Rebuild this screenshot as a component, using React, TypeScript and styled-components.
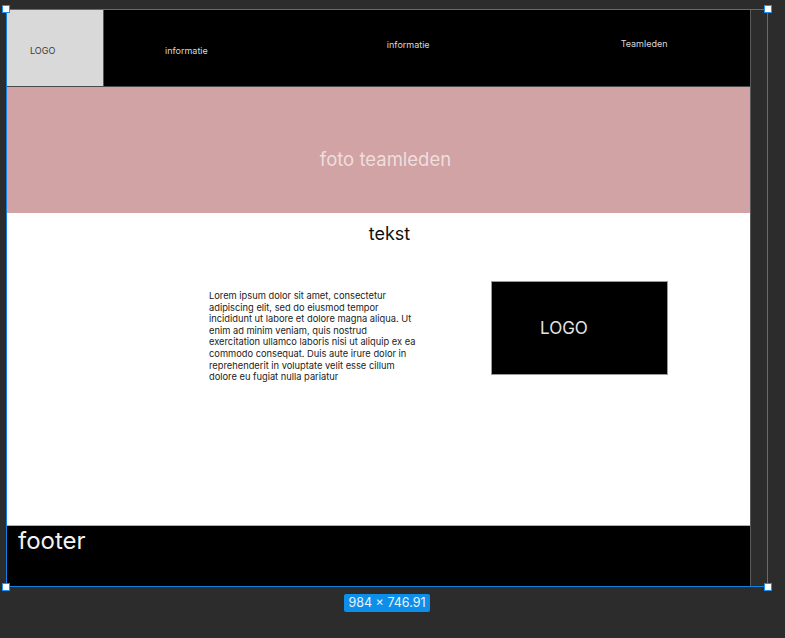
import styled, { createGlobalStyle } from 'styled-components'

const GlobalStyle = createGlobalStyle`
  html, body {
    margin: 0;
    padding: 0;
    background: #2c2c2c;
  }
  body {
    font-family: Inter, "Noto Sans", sans-serif;
    overflow: hidden;
  }
`

const loremLines = [
  'Lorem ipsum dolor sit amet, consectetur',
  'adipiscing elit, sed do eiusmod tempor',
  'incididunt ut labore et dolore magna aliqua. Ut',
  'enim ad minim veniam, quis nostrud',
  'exercitation ullamco laboris nisi ut aliquip ex ea',
  'commodo consequat. Duis aute irure dolor in',
  'reprehenderit in voluptate velit esse cillum',
  'dolore eu fugiat nulla pariatur',
]

//styled-components
const Canvas = styled.div`
  width: 785px;
  height: 638px;
  background: #2c2c2c;
  padding: 10px 0 0 7px;
  box-sizing: border-box;
  display: flex;
  flex-flow: column;
`

const Selection = styled.div`
  position: relative;
  width: 760px;
`

const Frame = styled.div`
  width: 743px;
  border-right: 1px solid #5a5a5a;
  display: flex;
  flex-flow: column;
  background: #ffffff;
`

const Outline = styled.div`
  position: absolute;
  left: -1px;
  top: -1px;
  width: 762px;
  height: 578px;
  border: 1px solid #1180e0;
  box-sizing: border-box;
  pointer-events: none;
`

const Handle = styled.div<{ $x: string; $y: string }>`
  position: absolute;
  width: 8px;
  height: 8px;
  background: #ffffff;
  border: 1.5px solid #1f8ff0;
  box-sizing: border-box;
  ${(p) => p.$x}: -5px;
  ${(p) => p.$y}: -5px;
`

const Header = styled.header`
  height: 77px;
  display: flex;
  flex-flow: row;
  align-items: flex-start;
  background: #000000;
  border-bottom: 1px solid #4a4a4a;
  box-sizing: border-box;
`

const LogoBox = styled.div`
  width: 97px;
  height: 76px;
  background: #d9d9d9;
  border-right: 1px solid #555;
  box-sizing: border-box;
  padding: 35px 0 0 23px;
  font-size: 9px;
  line-height: 11px;
  color: #3a3a3a;
`

const NavItem = styled.div<{ $left: number; $top: number }>`
  margin-left: ${(p) => p.$left}px;
  padding-top: ${(p) => p.$top}px;
  font-size: 9px;
  line-height: 11px;
  color: #d8d8d8;
`

const Hero = styled.section`
  height: 126px;
  background: #d1a3a4;
  display: flex;
  align-items: center;
  justify-content: center;
  padding-left: 14px;
  padding-top: 18px;
  box-sizing: border-box;
  font-size: 18.5px;
  color: #efdede;
`

const Content = styled.section`
  height: 313px;
  display: flex;
  flex-flow: column;
  align-items: center;
  border-bottom: 1px solid #b0b0b0;
  box-sizing: border-box;
`

const Title = styled.h2`
  margin: 10px 0 0 22px;
  font-size: 18px;
  line-height: 22px;
  font-weight: 400;
  color: #111;
`

const Row = styled.div`
  align-self: stretch;
  display: flex;
  flex-flow: row;
  align-items: flex-start;
  padding-left: 202px;
  margin-top: 36px;
`

const Paragraph = styled.p`
  width: 212px;
  margin: 9px 0 0 0;
  font-size: 9.3px;
  line-height: 11.6px;
  white-space: nowrap;
  color: #222;
`

const LogoPanel = styled.div`
  width: 177px;
  height: 94px;
  margin-left: 70px;
  background: #000;
  border: 1px solid #9a9a9a;
  box-sizing: border-box;
  display: flex;
  align-items: center;
  padding-left: 48px;
  font-size: 17px;
  color: #e4e4e4;
`

const Footer = styled.footer`
  height: 60px;
  background: #000;
  padding: 1px 0 0 11px;
  box-sizing: border-box;
  font-size: 24px;
  line-height: 28px;
  color: #f2f2f2;
`

const BadgeRow = styled.div`
  width: 760px;
  display: flex;
  justify-content: center;
  margin-top: 8px;
`

const Badge = styled.div`
  background: #0d8ee9;
  color: #e8f4ff;
  border-radius: 2px;
  padding: 2px 5px;
  font-size: 12.5px;
  line-height: 14px;
`

const App = () => {
  return (
    <>
      <GlobalStyle />
      <Canvas>
        <Selection>
          <Frame>
            <Header>
              <LogoBox>LOGO</LogoBox>
              <NavItem $left={61} $top={35}>informatie</NavItem>
              <NavItem $left={179} $top={29}>informatie</NavItem>
              <NavItem $left={191} $top={28}>Teamleden</NavItem>
            </Header>
            <Hero>foto teamleden</Hero>
            <Content>
              <Title>tekst</Title>
              <Row>
                <Paragraph>
                  {loremLines.map((line, i) => (
                    <span key={i}>
                      {line}
                      {i < loremLines.length - 1 && <br />}
                    </span>
                  ))}
                </Paragraph>
                <LogoPanel>LOGO</LogoPanel>
              </Row>
            </Content>
            <Footer>footer</Footer>
          </Frame>
          <Outline>
            <Handle $x="left" $y="top" />
            <Handle $x="right" $y="top" />
            <Handle $x="left" $y="bottom" />
            <Handle $x="right" $y="bottom" />
          </Outline>
        </Selection>
        <BadgeRow>
          <Badge>984 × 746.91</Badge>
        </BadgeRow>
      </Canvas>
    </>
  )
}
export default App
